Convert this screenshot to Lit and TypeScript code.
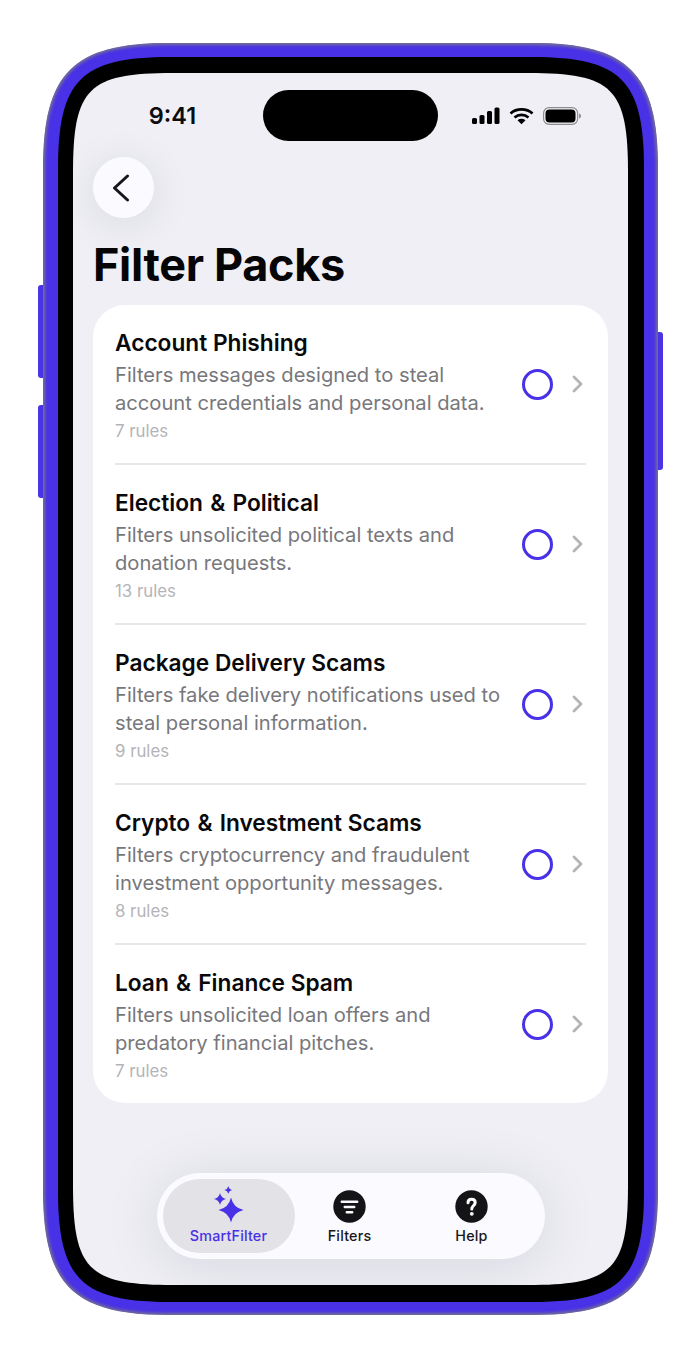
import { LitElement, html, css, svg, unsafeCSS } from "lit";
import { customElement } from "lit/decorators.js";

const packs = [
  { t: ["Account Phishing"], d: ["Filters messages designed to steal", "account credentials and personal data."], r: "7 rules" },
  { t: ["Election ", " Political"], d: ["Filters unsolicited political texts and", "donation requests."], r: "13 rules" },
  { t: ["Package Delivery Scams"], d: ["Filters fake delivery notifications used to", "steal personal information."], r: "9 rules" },
  { t: ["Crypto ", " Investment Scams"], d: ["Filters cryptocurrency and fraudulent", "investment opportunity messages."], r: "8 rules" },
  { t: ["Loan ", " Finance Spam"], d: ["Filters unsolicited loan offers and", "predatory financial pitches."], r: "7 rules" },
];

const star = (cx: number, cy: number, r: number, k = 0.18) => {
  const i = r * k;
  return `M${cx} ${cy - r}Q${cx + i} ${cy - i} ${cx + r} ${cy}Q${cx + i} ${cy + i} ${cx} ${cy + r}Q${cx - i} ${cy + i} ${cx - r} ${cy}Q${cx - i} ${cy - i} ${cx} ${cy - r}Z`;
};

// Continuous ("squircle") outline of a w x h box; e = corner extent, a = control offset.
const squircle = (w: number, h: number, e: number, a: number) =>
  `M${e} 0H${w - e}C${w - a} 0 ${w} ${a} ${w} ${e}V${h - e}C${w} ${h - a} ${w - a} ${h} ${w - e} ${h}H${e}C${a} ${h} 0 ${h - a} 0 ${h - e}V${e}C0 ${a} ${a} 0 ${e} 0Z`;

const OUTER = squircle(615, 1272, 125, 30);
const BEZEL = squircle(586, 1245, 112, 23);
const SCREEN = squircle(555, 1212, 100, 15);

@customElement("app-root")
export class AppRoot extends LitElement {
  static styles = css`
    :host { display: block; width: 700px; height: 1358px; background: #fff; overflow: hidden; font-family: Inter, "Liberation Sans", sans-serif; }
    .stage { padding: 43px 42px 43px 43px; }
    .device { position: relative; width: 615px; height: 1272px; }
    .key { position: absolute; width: 6px; background: #4a34e4; }
    .key.l { left: -5px; border-radius: 3px 0 0 3px; }
    .key.r { right: -5px; border-radius: 0 3px 3px 0; top: 289px; height: 138px; }
    .k1 { top: 242px; height: 93px; }
    .k2 { top: 362px; height: 93px; }
    .phone { position: relative; height: 100%; box-sizing: border-box; padding: 14px 14px 13px 15px; clip-path: path("${unsafeCSS(OUTER)}"); }
    .rim { position: absolute; inset: 0; display: block; }
    .bezel { position: relative; height: 100%; box-sizing: border-box; padding: 16px 16px 17px 15px; background: #000; clip-path: path("${unsafeCSS(BEZEL)}"); }
    .screen { height: 100%; background: #efeff5; clip-path: path("${unsafeCSS(SCREEN)}"); overflow: hidden; display: flex; flex-direction: column; padding: 17px 20px 26px; box-sizing: border-box; }
    .status { display: flex; align-items: center; height: 51px; flex: none; }
    .time { width: 170px; text-align: center; padding-right: 11px; box-sizing: border-box; font-size: 23.5px; font-weight: 600; color: #0c0c0f; }
    .island { width: 175px; height: 51px; border-radius: 26px; background: #000; }
    .sys { display: flex; align-items: center; margin-left: 34px; gap: 9px; }
    .sys svg { display: block; }
    .back { width: 61px; height: 61px; margin-top: 16px; flex: none; border-radius: 50%; background: #fbfaff; display: flex; align-items: center; justify-content: center; box-shadow: 0 6px 40px rgba(30, 30, 50, 0.1); }
    .back svg { display: block; margin-right: 5px; }
    h1 { margin: 19px 0 0; font-size: 45px; line-height: 56px; font-weight: 700; letter-spacing: -0.33px; color: #050507; }
    .card { margin-top: 12px; background: #fff; border-radius: 32px; padding: 0 22px; flex: none; }
    .row { height: 160px; box-sizing: border-box; display: flex; align-items: center; border-bottom: 2px solid #e7e7ea; }
    .row:last-child { border-bottom: 0; height: 158px; }
    .text { flex: 1; min-width: 0; padding-top: 2px; }
    .title { font-size: 22.7px; line-height: 28px; font-weight: 600; color: #09090b; }
    .amp { margin: 0 1.5px; }
    .desc { font-size: 20.15px; line-height: 28px; color: #77777c; margin-top: 4px; white-space: nowrap; }
    .rules { font-size: 16.8px; line-height: 22px; color: #b4b4b8; margin-top: 3px; }
    .radio { width: 31px; height: 31px; box-sizing: border-box; border: 3px solid #4831e6; border-radius: 50%; flex: none; }
    .chev { margin: 0 3px 0 19px; flex: none; display: block; }
    .spacer { flex: 1; }
    .tabs { align-self: center; width: 388px; height: 86px; box-sizing: border-box; padding: 6px; flex: none; border-radius: 43px; background: #fbfaff; display: grid; grid-template-columns: 132px 110px 134px; box-shadow: 0 6px 60px rgba(20, 20, 50, 0.11); }
    .tab { display: flex; flex-direction: column; align-items: center; font-size: 14.3px; font-weight: 500; color: #17171a; }
    .tab.active { border-radius: 37px; background: #e2e2e7; color: #4831e6; }
    .tab svg { display: block; flex: none; }
    .ic { height: 48px; padding-top: 11px; box-sizing: border-box; }
    .ic.spark { padding-top: 7px; }
    .tab span { line-height: 18px; letter-spacing: 0.2px; }
  `;

  render() {
    return html`
      <div class="stage">
        <div class="device">
          <div class="key l k1"></div>
          <div class="key l k2"></div>
          <div class="key r"></div>
          <div class="phone">
            <svg class="rim" width="615" height="1272" viewBox="0 0 615 1272">
              <defs><filter id="soft" x="-5%" y="-5%" width="110%" height="110%"><feGaussianBlur stdDeviation="1.6" /></filter></defs>
              <path d="${OUTER}" fill="#4831e6" />
              <path d="${OUTER}" fill="none" stroke="#76728f" stroke-width="4" filter="url(#soft)" />
            </svg>
            <div class="bezel">
              <div class="screen">
                <div class="status">
                  <div class="time">9:41</div>
                  <div class="island"></div>
                  <div class="sys">
                    <svg width="28" height="18" viewBox="0 0 28 18" fill="#000">
                      <rect x="0" y="11" width="5" height="6" rx="1.5"/>
                      <rect x="7.5" y="8" width="5" height="9" rx="1.5"/>
                      <rect x="15" y="4" width="5" height="13" rx="1.5"/>
                      <rect x="22.5" y="0.5" width="5" height="16.5" rx="1.5"/>
                    </svg>
                    <svg width="25" height="18" viewBox="0 0 25 18" fill="none" stroke="#000" stroke-width="2.7">
                      <path d="M1.5 6.5C7.5 1 17.5 1 23.5 6.5"/>
                      <path d="M5.5 10.5C9.5 7 15.5 7 19.5 10.5"/>
                      <path d="M8.5 13.2L12.5 17.2L16.5 13.2C14 11.4 11 11.4 8.5 13.2Z" fill="#000" stroke="none"/>
                    </svg>
                    <svg width="39" height="18" viewBox="0 0 39 18">
                      <rect x="0.6" y="0.6" width="34" height="16.8" rx="5.5" fill="none" stroke="#8d8d92" stroke-width="1.2"/>
                      <rect x="2.5" y="2.5" width="30" height="13" rx="4" fill="#000"/>
                      <path d="M36 6.5C37.5 7 38 8 38 9S37.5 11 36 11.5Z" fill="#8d8d92"/>
                    </svg>
                  </div>
                </div>
                <div class="back">
                  <svg width="18" height="28" viewBox="0 0 18 28" fill="none" stroke="#17171a" stroke-width="3" stroke-linecap="round" stroke-linejoin="round">
                    <path d="M15.5 2L2.5 14L15.5 26"/>
                  </svg>
                </div>
                <h1>Filter Packs</h1>
                <div class="card">
                  ${packs.map(
                    (p) => html`
                      <div class="row">
                        <div class="text">
                          <div class="title">${p.t.length > 1 ? html`${p.t[0]}<span class="amp">&amp;</span>${p.t[1]}` : p.t[0]}</div>
                          <div class="desc">${p.d[0]}<br />${p.d[1]}</div>
                          <div class="rules">${p.r}</div>
                        </div>
                        <div class="radio"></div>
                        <svg class="chev" width="11" height="18" viewBox="0 0 11 18" fill="none" stroke="#b4b4b8" stroke-width="2.8" stroke-linecap="round" stroke-linejoin="round">
                          <path d="M2 2L9 9L2 16"/>
                        </svg>
                      </div>
                    `
                  )}
                </div>
                <div class="spacer"></div>
                <div class="tabs">
                  <div class="tab active">
                    <div class="ic spark">
                      <svg width="34" height="41" viewBox="0 0 34 41" fill="#4831e6">
                        ${svg`<path d="${star(19, 24, 12.5)}"/><path d="${star(8, 13, 6)}"/><path d="${star(16.3, 4, 3.8)}"/>`}
                      </svg>
                    </div>
                    <span>SmartFilter</span>
                  </div>
                  <div class="tab">
                    <div class="ic">
                      <svg width="33" height="33" viewBox="0 0 33 33">
                        <circle cx="16.5" cy="16.5" r="16.2" fill="#141416"/>
                        <path d="M8.8 11.7H24.2M11.8 16.9H21.2M13.8 22.2H19.2" stroke="#fbfaff" stroke-width="2.5" stroke-linecap="round" fill="none"/>
                      </svg>
                    </div>
                    <span>Filters</span>
                  </div>
                  <div class="tab">
                    <div class="ic">
                      <svg width="33" height="33" viewBox="0 0 33 33">
                        <circle cx="16.5" cy="16.5" r="16.2" fill="#141416"/>
                        <path d="M13 12.8C13 10.6 14.5 9.3 16.6 9.3C18.7 9.3 20.2 10.6 20.2 12.5C20.2 15.4 16.8 15.6 16.8 19" stroke="#fbfaff" stroke-width="3" stroke-linecap="round" fill="none"/>
                        <circle cx="16.8" cy="23.8" r="1.9" fill="#fbfaff"/>
                      </svg>
                    </div>
                    <span>Help</span>
                  </div>
                </div>
              </div>
            </div>
          </div>
        </div>
      </div>
    `;
  }
}
